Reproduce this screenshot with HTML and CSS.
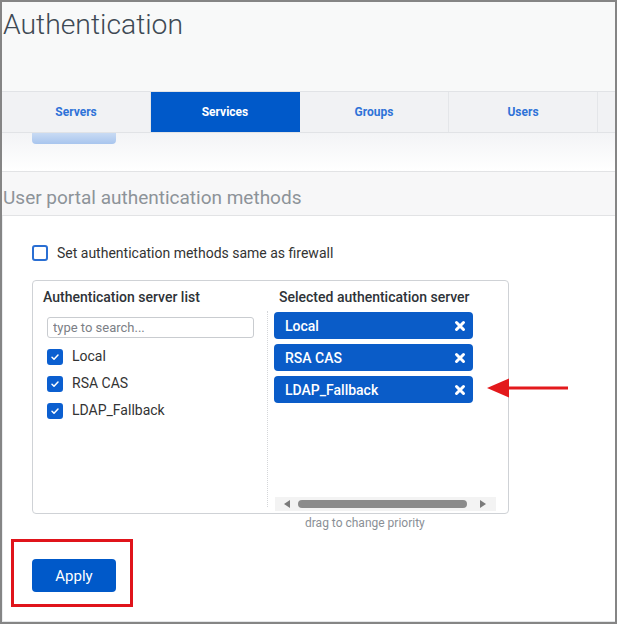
FILE: index.html
```html
<!DOCTYPE html>
<html lang="en">
<head>
<meta charset="utf-8">
<title>Authentication</title>
<link rel="stylesheet" href="styles.css">
</head>
<body>
<div class="frame">
  <header class="page-head"><h1>Authentication</h1></header>
  <nav class="tabs">
    <a class="tab">Servers</a>
    <a class="tab active">Services</a>
    <a class="tab">Groups</a>
    <a class="tab">Users</a>
    <span class="tab tab-rest"></span>
  </nav>
  <div class="strip"><span class="ghost-btn"></span></div>
  <div class="section-head">User portal authentication methods</div>
  <div class="section-body">
    <label class="check-row"><span class="cb"></span><span>Set authentication methods same as firewall</span></label>
    <div class="picker">
      <div class="col col-left">
        <h3 class="col-title">Authentication server list</h3>
        <input class="search" type="text" placeholder="type to search...">
        <ul class="server-list">
          <li><span class="cb checked"><svg viewBox="0 0 16 16"><path d="M4 8.3l2.7 2.7L12 5.3"/></svg></span>Local</li>
          <li><span class="cb checked"><svg viewBox="0 0 16 16"><path d="M4 8.3l2.7 2.7L12 5.3"/></svg></span>RSA CAS</li>
          <li><span class="cb checked"><svg viewBox="0 0 16 16"><path d="M4 8.3l2.7 2.7L12 5.3"/></svg></span>LDAP_Fallback</li>
        </ul>
      </div>
      <div class="divider"></div>
      <div class="col col-right">
        <h3 class="col-title">Selected authentication server</h3>
        <div class="chips">
          <div class="chip"><span>Local</span><svg class="x" viewBox="0 0 12 12"><path d="M2.5 2.5l7 7M9.5 2.5l-7 7"/></svg></div>
          <div class="chip"><span>RSA CAS</span><svg class="x" viewBox="0 0 12 12"><path d="M2.5 2.5l7 7M9.5 2.5l-7 7"/></svg></div>
          <div class="chip"><span>LDAP_Fallback</span><svg class="x" viewBox="0 0 12 12"><path d="M2.5 2.5l7 7M9.5 2.5l-7 7"/></svg></div>
        </div>
        <div class="hscroll">
          <span class="arr arr-left"></span>
          <span class="thumb"></span>
          <span class="arr arr-right"></span>
        </div>
      </div>
    </div>
    <div class="hint">drag to change priority</div>
    <div class="highlight"><button class="apply">Apply</button></div>
  </div>
  <svg class="callout" viewBox="0 0 82 22" width="82" height="22"><path d="M14 9.5H81v3H14z" fill="#e3191c"/><path d="M0 11L22 1.5V20.5z" fill="#e3191c"/></svg>
</div>
</body>
</html>
```

FILE: styles.css
```css
* { box-sizing: border-box; }
html, body { margin: 0; padding: 0; background: #fff; }
body { font-family: Roboto, "Liberation Sans", sans-serif; color: #333; }

.frame {
  position: relative;
  width: 617px;
  height: 624px;
  border: 2px solid #858585;
  background: #fff;
  overflow: hidden;
  display: flex;
  flex-direction: column;
}

.page-head {
  height: 90px;
  flex: none;
  background: #f8f9f9;
  border-bottom: 1px solid #e1e3e6;
}
.page-head h1 {
  margin: 0;
  padding: 6px 0 0 1px;
  font-size: 28.3px;
  line-height: 34px;
  font-weight: 300;
  color: #3e4954;
}

.tabs {
  display: flex;
  flex: none;
  height: 41px;
  background: #f1f2f4;
  border-bottom: 1px solid #e1e3e6;
}
.tab {
  width: 149px;
  border-right: 1px solid #e4e6e9;
  display: flex;
  align-items: center;
  justify-content: center;
  font-size: 12px;
  font-weight: 700;
  color: #2f73d8;
}
.tab.active { background: #0059c9; color: #fff; border-right-color: #0059c9; }
.tab-rest { flex: 1; border-right: none; }

.strip {
  height: 38px;
  flex: none;
  background: linear-gradient(#f3f4f6, #fff);
  padding-left: 30px;
}
.ghost-btn {
  display: block;
  width: 84px;
  height: 11px;
  border-radius: 0 0 4px 4px;
  background: linear-gradient(#c9dbf3, #a8c5ee);
}

.section-head {
  height: 45px;
  flex: none;
  border-top: 1px solid #e2e3e5;
  border-bottom: 1px solid #e2e3e5;
  background: #f7f7f8;
  padding: 9px 0 0 1px;
  font-size: 19px;
  font-weight: 400;
  line-height: 33px;
  color: #8d9399;
}

.section-body {
  flex: 1;
  padding: 29px 0 0 29px;
  border-left: 1px solid #eceef0;
  border-bottom: 1px solid #e3e5e7;
}

.check-row {
  display: flex;
  align-items: center;
  gap: 9px;
  height: 16px;
  font-size: 14px;
  color: #333;
}
.cb {
  width: 16px;
  height: 16px;
  flex: none;
  border: 2px solid #2a6fd3;
  border-radius: 3px;
  display: inline-flex;
  align-items: center;
  justify-content: center;
}
.cb.checked { background: #0b5fd0; border-color: #0b5fd0; }
.cb svg { width: 16px; height: 16px; fill: none; stroke: #fff; stroke-width: 2; stroke-linecap: round; stroke-linejoin: round; }

.picker {
  margin-top: 19px;
  width: 477px;
  height: 234px;
  border: 1px solid #cfd2d6;
  border-radius: 4px;
  display: flex;
}
.col { display: flex; flex-direction: column; }
.col-left { width: 234px; padding: 8px 0 0 10px; }
.col-right { flex: 1; padding: 8px 0 2px 6px; }
.col-title {
  margin: 0;
  font-size: 14px;
  font-weight: 500;
  line-height: 17px;
  color: #2e3338;
}
.col-right .col-title { padding-left: 5px; }

.divider {
  width: 1px;
  margin: 30px 0 6px;
  border-left: 1px dotted #d4d6d9;
}

.search {
  margin: 11px 0 0 4px;
  width: 207px;
  height: 21px;
  border: 1px solid #c9ccd0;
  border-radius: 3px;
  padding: 0 5px;
  font-family: inherit;
  font-size: 13px;
  color: #333;
  outline: none;
}
.search::placeholder { color: #7c8086; }

.server-list {
  list-style: none;
  margin: 11px 0 0 4px;
  padding: 0;
  display: flex;
  flex-direction: column;
  gap: 11px;
}
.server-list li {
  display: flex;
  align-items: flex-start;
  gap: 9px;
  height: 16px;
  font-size: 14px;
  color: #333;
  line-height: 14px;
}

.chips {
  margin-top: 6px;
  width: 199px;
  display: flex;
  flex-direction: column;
  gap: 5px;
}
.chip {
  height: 27px;
  background: #0a5cc8;
  border-radius: 4px;
  display: flex;
  align-items: center;
  justify-content: space-between;
  padding: 0 7px 0 11px;
  color: #fff;
  font-size: 14px;
  font-weight: 500;
}
.chip .x { width: 12px; height: 12px; fill: none; stroke: #fff; stroke-width: 3; stroke-linecap: round; }

.hscroll {
  margin-top: auto;
  margin-left: 1px;
  width: 221px;
  height: 14px;
  background: #f3f3f3;
  display: flex;
  align-items: center;
  padding: 0 10px 0 9px;
}
.arr { width: 0; height: 0; border-top: 4px solid transparent; border-bottom: 4px solid transparent; }
.arr-left { border-right: 6px solid #7b7b7b; }
.arr-right { border-left: 6px solid #7b7b7b; margin-left: auto; }
.thumb {
  margin-left: 8px;
  width: 169px;
  height: 8px;
  border-radius: 4px;
  background: #8b8b8b;
}

.hint {
  margin: 1px 0 0 273px;
  height: 16px;
  line-height: 16px;
  font-size: 12px;
  color: #8a8f96;
}

.highlight {
  margin: 8px 0 0 -21px;
  width: 122px;
  height: 68px;
  border: 3px solid #e0141b;
  padding: 17px 0 0 18px;
}
.apply {
  width: 84px;
  height: 33px;
  border: none;
  border-radius: 4px;
  background: #0059c9;
  color: #fff;
  font-family: inherit;
  font-size: 15px;
  font-weight: 400;
  padding: 0;
}

.callout {
  position: absolute;
  left: 485px;
  top: 375px;
}
```
